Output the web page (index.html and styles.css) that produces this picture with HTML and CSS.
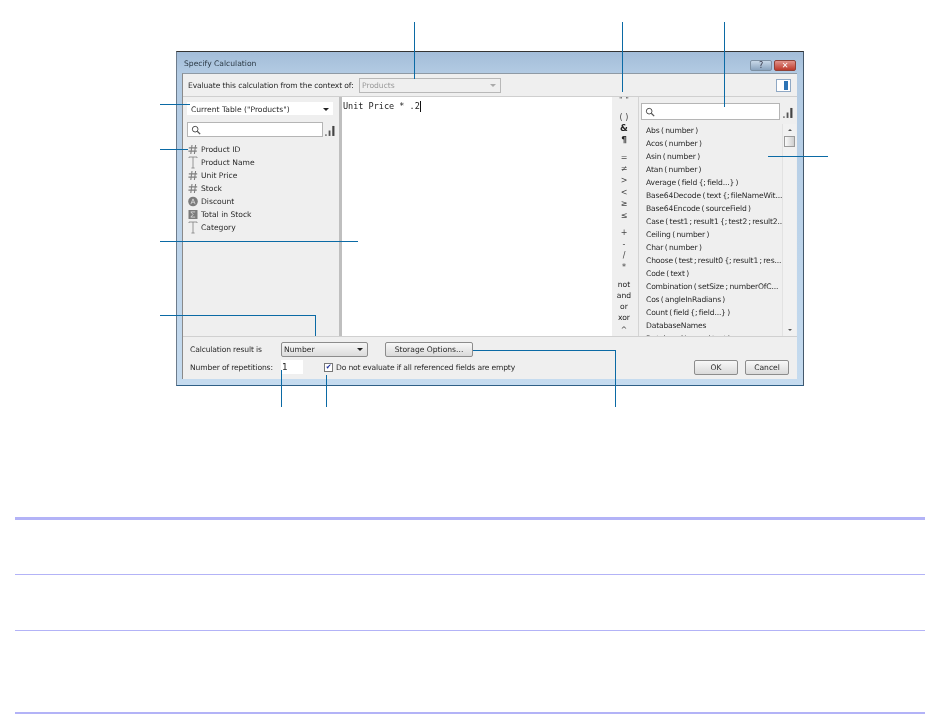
FILE: index.html
```html
<!DOCTYPE html>
<html lang="en">
<head>
<meta charset="utf-8">
<title>Specify Calculation</title>
<link rel="stylesheet" href="styles.css">
</head>
<body>
<svg class="defs" width="0" height="0" aria-hidden="true">
  <symbol id="search" viewBox="0 0 12 12"><circle cx="5" cy="5" r="3.4" fill="none" stroke="#555" stroke-width="1.2"/><path d="M7.5 7.5L11 11" stroke="#555" stroke-width="1.5"/></symbol>
  <symbol id="bars" viewBox="0 0 11 12"><path d="M0 10h2v2H0z" fill="#8a8a8a"/><path d="M4 6h2v6H4z" fill="#555"/><path d="M8 1h2.4v11H8z" fill="#444"/></symbol>
  <symbol id="hash" viewBox="0 0 10 10"><path d="M4 .5L2.8 9.5M7.6 .5L6.4 9.5M.8 3.4h8.4M.4 6.6h8.4" fill="none" stroke="#808080" stroke-width="1.1"/></symbol>
  <symbol id="tee" viewBox="0 0 10 13"><path d="M1 2V1h8v1M5 1v11M3.4 12h3.2" fill="none" stroke="#808080" stroke-width=".8"/></symbol>
  <symbol id="calc" viewBox="0 0 10 10"><circle cx="5" cy="5" r="4.8" fill="#7c7c7c"/><path d="M2.9 7.6L5 2.4l2.1 5.2M3.7 5.8h2.6" fill="none" stroke="#ddd" stroke-width=".8"/></symbol>
  <symbol id="sum" viewBox="0 0 10 10"><path d="M.5 .5h9v9h-9z" fill="#7c7c7c"/><path d="M7.2 2.4H2.8L5.1 5 2.8 7.6h4.4" fill="none" stroke="#e4e4e4" stroke-width=".8"/></symbol>
</svg>

<div class="figure">
  <div class="dialog">
    <div class="titlebar">
      <span class="title">Specify Calculation</span>
      <div class="winbtns">
        <span class="winbtn help">?</span>
        <span class="winbtn close">✕</span>
      </div>
    </div>
    <div class="frame">
      <div class="contextrow">
        <span class="contextlabel">Evaluate this calculation from the context of:</span>
        <div class="contextselect"><span>Products</span><i class="caret light"></i></div>
        <div class="toggle"><span class="togglebar"></span></div>
      </div>
      <div class="main">
        <div class="fields">
          <div class="tablesel"><span>Current Table ("Products")</span><i class="caret"></i></div>
          <div class="searchrow">
            <div class="search"><svg class="searchicon"><use href="#search"/></svg></div>
            <svg class="bars"><use href="#bars"/></svg>
          </div>
          <ul class="fieldlist">
            <li><svg class="ficon"><use href="#hash"/></svg>Product ID</li>
            <li><svg class="ficon"><use href="#tee"/></svg>Product Name</li>
            <li><svg class="ficon"><use href="#hash"/></svg>Unit Price</li>
            <li><svg class="ficon"><use href="#hash"/></svg>Stock</li>
            <li><svg class="ficon"><use href="#calc"/></svg>Discount</li>
            <li><svg class="ficon"><use href="#sum"/></svg>Total in Stock</li>
            <li><svg class="ficon"><use href="#tee"/></svg>Category</li>
          </ul>
        </div>
        <div class="editor">Unit Price * .2<span class="cursor"></span></div>
        <div class="ops">
          <div class="opgroup quotes"><span>" "</span></div>
          <div class="opgroup"><span>( )</span><span class="strong">&amp;</span><span class="strong">¶</span></div>
          <div class="opgroup"><span>=</span><span>≠</span><span>&gt;</span><span>&lt;</span><span>≥</span><span>≤</span></div>
          <div class="opgroup"><span>+</span><span>-</span><span>/</span><span>*</span></div>
          <div class="opgroup words"><span>not</span><span>and</span><span>or</span><span>xor</span><span>^</span></div>
        </div>
        <div class="functions">
          <div class="fnhead">
            <div class="search fnsearch"><svg class="searchicon"><use href="#search"/></svg></div>
            <svg class="bars"><use href="#bars"/></svg>
          </div>
          <div class="fnbody">
            <ul class="fnlist">
              <li>Abs ( number )</li>
              <li>Acos ( number )</li>
              <li>Asin ( number )</li>
              <li>Atan ( number )</li>
              <li>Average ( field {; field...} )</li>
              <li>Base64Decode ( text {; fileNameWit...</li>
              <li>Base64Encode ( sourceField )</li>
              <li>Case ( test1 ; result1 {; test2 ; result2...</li>
              <li>Ceiling ( number )</li>
              <li>Char ( number )</li>
              <li>Choose ( test ; result0 {; result1 ; res...</li>
              <li>Code ( text )</li>
              <li>Combination ( setSize ; numberOfC...</li>
              <li>Cos ( angleInRadians )</li>
              <li>Count ( field {; field...} )</li>
              <li>DatabaseNames</li>
              <li>DatabaseNames ( text )</li>
            </ul>
            <div class="scrollbar"><i class="arrow up"></i><span class="thumb"></span><i class="arrow down"></i></div>
          </div>
        </div>
      </div>
      <div class="bottom">
        <div class="bottomgrid">
          <span class="blabel">Calculation result is</span>
          <div class="resultsel"><span>Number</span><i class="caret"></i></div>
          <button class="btn storage">Storage Options...</button>
          <span class="blabel">Number of repetitions:</span>
          <div class="reps">1</div>
          <div class="check"><span class="checkbox">✔</span><span>Do not evaluate if all referenced fields are empty</span></div>
        </div>
        <div class="actions">
          <button class="btn action">OK</button>
          <button class="btn action">Cancel</button>
        </div>
      </div>
    </div>
  </div>

  <i class="line v c1"></i>
  <i class="line v c2"></i>
  <i class="line v c3"></i>
  <i class="line h c4"></i>
  <i class="line h c5"></i>
  <i class="line h c6"></i>
  <i class="line h c7"></i>
  <i class="line v c8"></i>
  <i class="line h c9"></i>
  <i class="line h c10"></i>
  <i class="line v c11"></i>
  <i class="line v c12"></i>
  <i class="line v c13"></i>
</div>

<div class="rules">
  <div class="rule r1"></div>
  <div class="rule r2"></div>
  <div class="rule r3"></div>
  <div class="rule r4"></div>
</div>
</body>
</html>
```

FILE: styles.css
```css
* { box-sizing: border-box; }
html, body { margin: 0; padding: 0; background: #fff; overflow: hidden; }
body { width: 925px; height: 714px; font-family: "DejaVu Sans", "Liberation Sans", sans-serif; color: #2a2a2a; }
.defs { position: absolute; }
ul { list-style: none; margin: 0; padding: 0; }
i { display: block; }

.figure { position: relative; height: 517px; padding: 51px 0 0 176px; }

.dialog {
  width: 628px; height: 335px; padding: 0 6px 6px 5px;
  display: flex; flex-direction: column;
  background: linear-gradient(#a3bdd9 0, #b3cbe3 22px, #bdd4ea 60%, #c5dbef 100%);
  border-top: 1px solid #333;
  border-left: 1px solid #6d7c8c;
  border-right: 1px solid #44586b;
  border-bottom: 1px solid #2f5f86;
  filter: blur(.3px);
}
.titlebar { height: 21px; flex: none; display: flex; align-items: center; justify-content: space-between; }
.title { font-size: 7.6px; padding: 2px 0 0 2px; color: #2c3a46; }
.winbtns { display: flex; gap: 2px; margin: 5px 1px 0 0; }
.winbtn {
  width: 22px; height: 11px; font-size: 8px; line-height: 10px; text-align: center; border-radius: 2px;
  border: 1px solid #7d90a3;
}
.help { background: linear-gradient(#c8d8e8, #8aa4bf); color: #334; }
.close { background: linear-gradient(#e2938a, #bd3a2c); border-color: #8f4238; color: #fff; font-weight: bold; }

.frame {
  flex: 1; min-height: 0; display: flex; flex-direction: column;
  background: #efefef; border-left: 1px solid #8a8a8a; border-top: 1px solid #8f9aa5;
}
.contextrow { height: 23px; flex: none; display: flex; align-items: center; padding-left: 5px; border-bottom: 1px solid #cfcfcf; }
.contextlabel { font-size: 7.6px; letter-spacing: -.12px; width: 171px; white-space: nowrap; }
.contextselect {
  width: 142px; height: 15px; border: 1px solid #b8b8b8; background: #efefef;
  display: flex; align-items: center; justify-content: space-between; padding: 0 4px 0 2px;
  font-size: 7.6px; color: #999;
}
.toggle { margin-left: auto; margin-right: 6px; width: 15px; height: 13px; border: 1px solid #8fa8c4; background: #fff; display: flex; justify-content: flex-end; padding: 1px 2px; }
.togglebar { width: 4px; background: #2e74b5; }

.caret { width: 0; height: 0; border: 3px solid transparent; border-top: 3px solid #222; border-bottom: 0; }
.caret.light { border-top-color: #aaa; }

.main { flex: 1; min-height: 0; display: flex; }

.fields { width: 159px; flex: none; padding: 5px 4px 0 4px; background: #efefef; border-right: 3px solid #bfbfbf; }
.tablesel {
  width: 146px; height: 13px; background: #fff; font-size: 7.6px;
  display: flex; align-items: center; justify-content: space-between; padding: 1px 4px 0 4px;
}
.searchrow { display: flex; align-items: center; gap: 2px; margin-top: 7px; }
.search { width: 136px; height: 15px; background: #fff; border: 1px solid #b5b5b5; display: flex; align-items: center; padding-left: 3px; }
.searchicon { width: 10px; height: 10px; }
.bars { width: 10px; height: 11px; margin-top: 2px; }

.fieldlist { margin-top: 6px; }
.fieldlist li { height: 13px; display: flex; align-items: center; font-size: 7.6px; white-space: nowrap; }
.ficon { width: 10px; height: 13px; margin: 0 3px 0 1px; flex: none; }

.editor { width: 270px; flex: none; background: #fff; padding: 4px 0 0 1px; font: 8.5px/11px "DejaVu Sans Mono", "Liberation Mono", monospace; color: #222; white-space: pre; }
.cursor { display: inline-block; width: 1px; height: 11px; background: #111; vertical-align: top; }

.ops { width: 27px; flex: none; background: #efefef; padding-right: 2px; display: flex; flex-direction: column; align-items: center; overflow: hidden; border-right: 1px solid #d4d4d4; font-size: 8px; color: #444; }
.opgroup { display: flex; flex-direction: column; align-items: center; margin-bottom: 5.5px; }
.opgroup span { height: 11.6px; line-height: 11.6px; }
.opgroup .strong { font-weight: bold; font-size: 9px; color: #222; }
.opgroup.quotes { margin-top: -2px; margin-bottom: 5px; }
.opgroup.words { margin-top: 0; font-size: 7.6px; color: #222; }
.opgroup.words span { height: 11.2px; line-height: 11.2px; }

.functions { flex: 1; min-width: 0; display: flex; flex-direction: column; padding-left: 2px; }
.fnhead { display: flex; align-items: center; gap: 3px; height: 27px; padding-top: 2px; flex: none; }
.fnsearch { width: 139px; height: 17px; }
.fnbody { flex: 1; min-height: 0; display: flex; }
.fnlist { flex: 1; min-width: 0; padding-left: 5px; overflow: hidden; }
.fnlist li { height: 13px; line-height: 13px; font-size: 7.6px; letter-spacing: -.17px; word-spacing: -.8px; white-space: nowrap; }

.scrollbar { width: 14px; flex: none; margin-right: 1px; background: #f1f1f1; border-left: 1px solid #e2e2e2; display: flex; flex-direction: column; align-items: center; padding: 5px 0; }
.thumb { width: 11px; height: 11px; margin-top: 5px; background: linear-gradient(90deg, #fafafa, #cfcfcf); border: 1px solid #9a9a9a; }
.arrow { width: 0; height: 0; border: 2px solid transparent; }
.arrow.up { border-bottom-color: #555; border-top: 0; }
.arrow.down { border-top-color: #555; border-bottom: 0; margin-top: auto; }

.bottom { height: 43px; flex: none; background: #efefef; border-top: 1px solid #d0d0d0; display: flex; justify-content: space-between; padding: 5px 8px 0 7px; }
.bottomgrid { display: grid; grid-template-columns: 91px 104px auto; grid-template-rows: 15px 16px; row-gap: 2px; align-items: center; }
.blabel { font-size: 7.6px; letter-spacing: -.14px; white-space: nowrap; }
.resultsel {
  width: 87px; height: 15px; border: 1px solid #8c8c8c; border-radius: 2px;
  background: linear-gradient(#f6f6f6, #dcdcdc); font-size: 7.6px;
  display: flex; align-items: center; justify-content: space-between; padding: 0 4px 0 2px;
}
.btn { font-family: inherit; color: #2a2a2a; font-size: 7.6px; padding: 0; border: 1px solid #8c8c8c; border-radius: 2px; background: linear-gradient(#f8f8f8, #dadada); }
.storage { width: 88px; height: 15px; }
.reps { width: 22px; height: 14px; background: #fff; font-size: 9px; line-height: 14px; padding-left: 1px; }
.check { display: flex; align-items: center; gap: 3px; font-size: 7.6px; letter-spacing: -.16px; white-space: nowrap; margin-left: -61px; }
.checkbox { width: 9px; height: 9px; background: #fff; border: 1px solid #777; font-size: 7px; line-height: 7px; color: #1c2f9c; text-align: center; }
.actions { display: flex; gap: 7px; align-items: flex-end; padding-bottom: 4px; }
.action { width: 44px; height: 15px; }

.line { position: absolute; background: #0b6aa5; }
.line.v { width: 1px; }
.line.h { height: 1px; }
.c1 { left: 414px; top: 22px; height: 57px; }
.c2 { left: 622px; top: 22px; height: 70px; }
.c3 { left: 724px; top: 22px; height: 85px; }
.c4 { left: 160px; top: 104px; width: 30px; }
.c5 { left: 160px; top: 149px; width: 28px; }
.c6 { left: 160px; top: 241px; width: 198px; }
.c7 { left: 160px; top: 315px; width: 155px; }
.c8 { left: 315px; top: 315px; height: 21px; }
.c9 { left: 768px; top: 156px; width: 60px; }
.c10 { left: 473px; top: 350px; width: 142px; }
.c11 { left: 615px; top: 350px; height: 57px; }
.c12 { left: 281px; top: 370px; height: 37px; }
.c13 { left: 326px; top: 375px; height: 32px; }

.rules { margin-left: 15px; height: 197px; display: flex; flex-direction: column; }
.rule { background: #b3b3f7; flex: none; }
.r1 { height: 3px; margin-bottom: 54px; }
.r2 { height: 1px; margin-bottom: 55px; }
.r3 { height: 1px; margin-bottom: 81px; }
.r4 { height: 2px; }
```
